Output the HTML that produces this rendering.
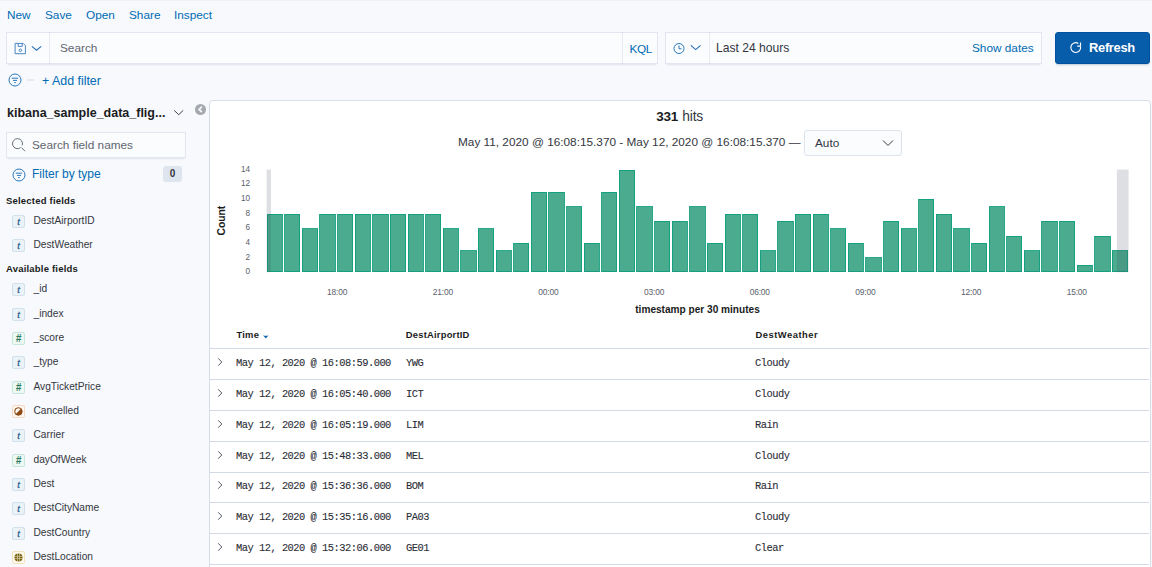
<!DOCTYPE html>
<html><head><meta charset="utf-8">
<style>
*{box-sizing:border-box;margin:0;padding:0}
html,body{width:1152px;height:567px;overflow:hidden;background:#F7F9FC;font-family:"Liberation Sans",sans-serif;color:#343741}
.a{position:absolute;white-space:pre}
.link{color:#006BB4}
.nav{top:8px;font-size:11.8px;line-height:14px}
.box{position:absolute;background:#FBFCFD;box-shadow:0 1px 1px -1px rgba(152,162,179,.2),0 3px 2px -2px rgba(152,162,179,.2),inset 0 0 0 1px rgba(17,43,134,.1)}
.vline{position:absolute;top:0;bottom:0;width:1px;background:rgba(17,43,134,.08)}
.fld{position:absolute;left:0;width:200px;height:24px}
.tok{position:absolute;left:12px;top:0;width:13px;height:13px;border-radius:2.5px;font:italic 9.5px "Liberation Sans",sans-serif;-webkit-text-stroke:0.25px currentColor;text-align:center;line-height:13px}
.tok.t{background:#EBF2F8;box-shadow:inset 0 0 0 1px #D0E0EC;color:#1F5B86}
.tok.n{background:#EEF8F4;box-shadow:inset 0 0 0 1px #C7E6DA;color:#2B7A60;font:italic bold 10px "Liberation Sans",sans-serif;-webkit-text-stroke:0;line-height:13px}
.fname{position:absolute;left:33.5px;top:-0.6px;font-size:10.2px;line-height:13px;color:#343741}
.sech{position:absolute;left:6px;margin-top:0.8px;font-weight:bold;font-size:9.5px;letter-spacing:0.2px;color:#1a1c21}
.mono{font-family:"Liberation Mono",monospace;font-size:10.4px;letter-spacing:-0.5px;color:#2a2d35;-webkit-text-stroke:0.1px #2a2d35}
.row{position:absolute;left:210px;width:939px;height:31px;border-bottom:1px solid #D3DAE6}
</style></head><body>

<div class="a" style="left:0;top:0;width:1152px;height:1px;background:#EFF2F6"></div>
<!-- top nav -->
<div class="a link nav" style="left:7px">New</div>
<div class="a link nav" style="left:45px">Save</div>
<div class="a link nav" style="left:86px">Open</div>
<div class="a link nav" style="left:129px">Share</div>
<div class="a link nav" style="left:174px">Inspect</div>

<!-- query bar -->
<div class="box" style="left:6px;top:32px;width:652px;height:32px">
  <div class="vline" style="left:43px"></div>
  <div class="vline" style="left:616px"></div>
</div>
<svg class="a" style="left:14px;top:42px" width="30" height="14" viewBox="0 0 30 14">
  <path d="M1.1 1.4H9.2L11.4 3.6V11.7H1.1Z" fill="none" stroke="#3F80C2" stroke-width="0.95" stroke-linejoin="round"/>
  <path d="M4.2 1.4V4.4H8.2V1.4" fill="none" stroke="#3F80C2" stroke-width="0.95"/>
  <circle cx="6.4" cy="8.3" r="1.25" fill="none" stroke="#3F80C2" stroke-width="0.95"/>
  <path d="M17.9 4.3l4.6 3.9 4.7-3.9" fill="none" stroke="#2472BA" stroke-width="1.1"/>
</svg>
<div class="a" style="left:60px;top:41px;font-size:11.8px;color:#5F6570">Search</div>
<div class="a link" style="left:629.5px;top:41.5px;font-size:11.8px;letter-spacing:-0.45px">KQL</div>

<!-- date picker -->
<div class="box" style="left:665px;top:32px;width:377px;height:32px">
  <div class="vline" style="left:44px"></div>
</div>
<svg class="a" style="left:672px;top:42px" width="32" height="14" viewBox="0 0 32 14">
  <circle cx="7" cy="6.5" r="5" fill="none" stroke="#1F72B8" stroke-width="0.95"/>
  <path d="M7 3.5v3.3h2.5" fill="none" stroke="#1F72B8" stroke-width="0.95"/>
  <path d="M18.9 3.3l4.8 4.3 4.9-4.3" fill="none" stroke="#2472BA" stroke-width="1.1"/>
</svg>
<div class="a" style="left:716px;top:40.8px;font-size:12.1px;color:#343741">Last 24 hours</div>
<div class="a link" style="left:972px;top:41px;font-size:11.8px">Show dates</div>

<!-- refresh -->
<div class="a" style="left:1055px;top:32px;width:95px;height:32px;background:#085DAA;border:1px solid #0151A0;border-radius:3px;box-shadow:0 2px 2px -1px rgba(54,97,126,.3)"></div>
<svg class="a" style="left:1069px;top:41px" width="14" height="14" viewBox="0 0 14 14">
  <path d="M9.3 2.4A4.9 4.9 0 1 0 11.6 5.9" fill="none" stroke="#fff" stroke-width="1.15"/>
  <path d="M8.2 5.1h3.3v-3.7" fill="none" stroke="#fff" stroke-width="1.15"/>
</svg>
<div class="a" style="left:1089px;top:40px;font-size:12.9px;letter-spacing:-0.3px;font-weight:bold;color:#fff">Refresh</div>

<!-- filter row -->
<svg class="a" style="left:8px;top:73px" width="30" height="14" viewBox="0 0 30 14">
  <circle cx="7" cy="7" r="6" fill="none" stroke="#1F72B8" stroke-width="0.95"/>
  <path d="M3.8 5.2h6.4M5 7.4h4M6.2 9.6h1.6" stroke="#1F72B8" stroke-width="0.95"/>
  <path d="M19 7h7" stroke="#D3DAE6" stroke-width="1"/>
</svg>
<div class="a link" style="left:42px;top:74px;font-size:12.4px">+ Add filter</div>

<!-- sidebar -->
<div class="a" style="left:7px;top:105.5px;font-size:12.5px;font-weight:bold;color:#1a1c21">kibana_sample_data_flig...</div>
<svg class="a" style="left:173px;top:108px" width="12" height="8" viewBox="0 0 12 8">
  <path d="M1.2 2.4l4.5 4.3 4.5-4.3" fill="none" stroke="#343741" stroke-width="0.95"/>
</svg>
<svg class="a" style="left:194px;top:103px" width="13" height="13" viewBox="0 0 13 13">
  <circle cx="6.5" cy="6.5" r="5.5" fill="#A5A8AE"/>
  <path d="M7.9 3.7L5.1 6.4l2.8 2.7" fill="none" stroke="#F7F9FC" stroke-width="1.7"/>
</svg>

<div class="box" style="left:6px;top:132px;width:180px;height:26px"></div>
<svg class="a" style="left:11px;top:137px" width="16" height="16" viewBox="0 0 16 16">
  <path d="M11.2 8.4A5 5 0 1 0 9.6 10.6" fill="none" stroke="#5F6570" stroke-width="0.95"/>
  <path d="M10.6 10.6l3.4 3.6" stroke="#5F6570" stroke-width="0.95"/>
</svg>
<div class="a" style="left:32px;top:138px;font-size:11.8px;color:#5F6570">Search field names</div>

<svg class="a" style="left:11.6px;top:167.5px" width="14" height="14" viewBox="0 0 14 14">
  <circle cx="7" cy="7" r="6" fill="none" stroke="#1F72B8" stroke-width="0.95"/>
  <path d="M3.8 5.2h6.4M5 7.4h4M6.2 9.6h1.6" stroke="#1F72B8" stroke-width="0.95"/>
</svg>
<div class="a link" style="left:32px;top:167px;font-size:12px">Filter by type</div>
<div class="a" style="left:163px;top:166px;width:19px;height:16px;background:#DFE5EE;border-radius:3px;font-size:10px;font-weight:bold;text-align:center;line-height:16px;color:#343741">0</div>

<div class="sech" style="top:194px">Selected fields</div>
<div class="fld" style="top:215px"><div class="tok t">t</div><div class="fname">DestAirportID</div></div>
<div class="fld" style="top:239px"><div class="tok t">t</div><div class="fname">DestWeather</div></div>
<div class="sech" style="top:262.2px">Available fields</div>
<div class="fld" style="top:283px"><div class="tok t">t</div><div class="fname">_id</div></div>
<div class="fld" style="top:308px"><div class="tok t">t</div><div class="fname">_index</div></div>
<div class="fld" style="top:332px"><div class="tok n">#</div><div class="fname">_score</div></div>
<div class="fld" style="top:356px"><div class="tok t">t</div><div class="fname">_type</div></div>
<div class="fld" style="top:381px"><div class="tok n">#</div><div class="fname">AvgTicketPrice</div></div>
<div class="fld" style="top:405px"><div class="tok" style="background:#FEF7F2;box-shadow:inset 0 0 0 1px #F5D9C4"><svg width="13" height="13" viewBox="0 0 13 13" style="position:absolute;left:0;top:0"><circle cx="6.4" cy="6.4" r="4" fill="#8C4A12"/><path d="M9.2 3.6A4 4 0 0 0 3.6 9.2z" fill="#fff" opacity=".95"/><circle cx="6.4" cy="6.4" r="3.6" fill="none" stroke="#8C4A12" stroke-width=".8"/></svg></div><div class="fname">Cancelled</div></div>
<div class="fld" style="top:429px"><div class="tok t">t</div><div class="fname">Carrier</div></div>
<div class="fld" style="top:454px"><div class="tok n">#</div><div class="fname">dayOfWeek</div></div>
<div class="fld" style="top:478px"><div class="tok t">t</div><div class="fname">Dest</div></div>
<div class="fld" style="top:502px"><div class="tok t">t</div><div class="fname">DestCityName</div></div>
<div class="fld" style="top:527px"><div class="tok t">t</div><div class="fname">DestCountry</div></div>
<div class="fld" style="top:551px"><div class="tok" style="background:#FFFBEF;box-shadow:inset 0 0 0 1px #F1E3B9"><svg width="13" height="13" viewBox="0 0 13 13" style="position:absolute;left:0;top:0"><circle cx="6.5" cy="6.5" r="4.1" fill="#7D6614"/><path d="M2.4 5.5h8.2M2.4 7.5h8.2M5.5 2.4v8.2M7.5 2.4v8.2" stroke="#FFFBEF" stroke-width=".55" opacity=".8"/></svg></div><div class="fname">DestLocation</div></div>

<!-- main panel -->
<div class="a" style="left:209px;top:100px;width:942px;height:480px;background:#fff;border:1px solid #D8DEE8;border-radius:4px"></div>

<div class="a" style="left:656.2px;top:109.1px;line-height:16px;font-size:13.5px;letter-spacing:-0.25px;font-weight:bold;color:#1a1c21">331</div><div class="a" style="left:682.3px;top:109px;line-height:16px;font-size:13.8px;letter-spacing:-0.2px;color:#343741">hits</div>
<div class="a" style="left:458px;top:134.6px;font-size:11.8px;color:#343741">May 11, 2020 @ 16:08:15.370 - May 12, 2020 @ 16:08:15.370 —</div>
<div class="a" style="left:804px;top:130px;width:98px;height:26px;background:#FBFCFD;border:1px solid #DDE3EC;border-radius:3px"></div>
<div class="a" style="left:815px;top:136px;font-size:11.8px;color:#343741">Auto</div>
<svg class="a" style="left:882px;top:139px" width="12" height="8" viewBox="0 0 12 8">
  <path d="M1 1.5l5 5 5-5" fill="none" stroke="#343741" stroke-width="1"/>
</svg>

<!-- chart -->
<svg id="chart" class="a" style="left:210px;top:160px" width="940" height="160" viewBox="0 0 940 160">
<rect x="57.150000000000006" y="54.010000000000005" width="15.209999999999999" height="57.74" fill="#4AAB8E" stroke="#0FA07D" stroke-width="0.9" shape-rendering="crispEdges">
</rect>
<rect x="74.76" y="54.010000000000005" width="15.209999999999999" height="57.74" fill="#4AAB8E" stroke="#0FA07D" stroke-width="0.9" shape-rendering="crispEdges">
</rect>
<rect x="92.37" y="68.67" width="15.209999999999999" height="43.080000000000005" fill="#4AAB8E" stroke="#0FA07D" stroke-width="0.9" shape-rendering="crispEdges">
</rect>
<rect x="109.98" y="54.010000000000005" width="15.209999999999999" height="57.74" fill="#4AAB8E" stroke="#0FA07D" stroke-width="0.9" shape-rendering="crispEdges">
</rect>
<rect x="127.59" y="54.010000000000005" width="15.209999999999999" height="57.74" fill="#4AAB8E" stroke="#0FA07D" stroke-width="0.9" shape-rendering="crispEdges">
</rect>
<rect x="145.2" y="54.010000000000005" width="15.209999999999999" height="57.74" fill="#4AAB8E" stroke="#0FA07D" stroke-width="0.9" shape-rendering="crispEdges">
</rect>
<rect x="162.81" y="54.010000000000005" width="15.209999999999999" height="57.74" fill="#4AAB8E" stroke="#0FA07D" stroke-width="0.9" shape-rendering="crispEdges">
</rect>
<rect x="180.42" y="54.010000000000005" width="15.209999999999999" height="57.74" fill="#4AAB8E" stroke="#0FA07D" stroke-width="0.9" shape-rendering="crispEdges">
</rect>
<rect x="198.02999999999997" y="54.010000000000005" width="15.209999999999999" height="57.74" fill="#4AAB8E" stroke="#0FA07D" stroke-width="0.9" shape-rendering="crispEdges">
</rect>
<rect x="215.64" y="54.010000000000005" width="15.209999999999999" height="57.74" fill="#4AAB8E" stroke="#0FA07D" stroke-width="0.9" shape-rendering="crispEdges">
</rect>
<rect x="233.25" y="68.67" width="15.209999999999999" height="43.080000000000005" fill="#4AAB8E" stroke="#0FA07D" stroke-width="0.9" shape-rendering="crispEdges">
</rect>
<rect x="250.85999999999996" y="90.66000000000001" width="15.209999999999999" height="21.090000000000003" fill="#4AAB8E" stroke="#0FA07D" stroke-width="0.9" shape-rendering="crispEdges">
</rect>
<rect x="268.46999999999997" y="68.67" width="15.209999999999999" height="43.080000000000005" fill="#4AAB8E" stroke="#0FA07D" stroke-width="0.9" shape-rendering="crispEdges">
</rect>
<rect x="286.08" y="90.66000000000001" width="15.209999999999999" height="21.090000000000003" fill="#4AAB8E" stroke="#0FA07D" stroke-width="0.9" shape-rendering="crispEdges">
</rect>
<rect x="303.69" y="83.33" width="15.209999999999999" height="28.42" fill="#4AAB8E" stroke="#0FA07D" stroke-width="0.9" shape-rendering="crispEdges">
</rect>
<rect x="321.29999999999995" y="32.02000000000001" width="15.209999999999999" height="79.72999999999999" fill="#4AAB8E" stroke="#0FA07D" stroke-width="0.9" shape-rendering="crispEdges">
</rect>
<rect x="338.90999999999997" y="32.02000000000001" width="15.209999999999999" height="79.72999999999999" fill="#4AAB8E" stroke="#0FA07D" stroke-width="0.9" shape-rendering="crispEdges">
</rect>
<rect x="356.52" y="46.68000000000001" width="15.209999999999999" height="65.07" fill="#4AAB8E" stroke="#0FA07D" stroke-width="0.9" shape-rendering="crispEdges">
</rect>
<rect x="374.13" y="83.33" width="15.209999999999999" height="28.42" fill="#4AAB8E" stroke="#0FA07D" stroke-width="0.9" shape-rendering="crispEdges">
</rect>
<rect x="391.73999999999995" y="32.02000000000001" width="15.209999999999999" height="79.72999999999999" fill="#4AAB8E" stroke="#0FA07D" stroke-width="0.9" shape-rendering="crispEdges">
</rect>
<rect x="409.34999999999997" y="10.029999999999998" width="15.209999999999999" height="101.72" fill="#4AAB8E" stroke="#0FA07D" stroke-width="0.9" shape-rendering="crispEdges">
</rect>
<rect x="426.96" y="46.68000000000001" width="15.209999999999999" height="65.07" fill="#4AAB8E" stroke="#0FA07D" stroke-width="0.9" shape-rendering="crispEdges">
</rect>
<rect x="444.56999999999994" y="61.34" width="15.209999999999999" height="50.410000000000004" fill="#4AAB8E" stroke="#0FA07D" stroke-width="0.9" shape-rendering="crispEdges">
</rect>
<rect x="462.17999999999995" y="61.34" width="15.209999999999999" height="50.410000000000004" fill="#4AAB8E" stroke="#0FA07D" stroke-width="0.9" shape-rendering="crispEdges">
</rect>
<rect x="479.78999999999996" y="46.68000000000001" width="15.209999999999999" height="65.07" fill="#4AAB8E" stroke="#0FA07D" stroke-width="0.9" shape-rendering="crispEdges">
</rect>
<rect x="497.4" y="83.33" width="15.209999999999999" height="28.42" fill="#4AAB8E" stroke="#0FA07D" stroke-width="0.9" shape-rendering="crispEdges">
</rect>
<rect x="515.0100000000001" y="54.010000000000005" width="15.209999999999999" height="57.74" fill="#4AAB8E" stroke="#0FA07D" stroke-width="0.9" shape-rendering="crispEdges">
</rect>
<rect x="532.62" y="54.010000000000005" width="15.209999999999999" height="57.74" fill="#4AAB8E" stroke="#0FA07D" stroke-width="0.9" shape-rendering="crispEdges">
</rect>
<rect x="550.23" y="90.66000000000001" width="15.209999999999999" height="21.090000000000003" fill="#4AAB8E" stroke="#0FA07D" stroke-width="0.9" shape-rendering="crispEdges">
</rect>
<rect x="567.84" y="61.34" width="15.209999999999999" height="50.410000000000004" fill="#4AAB8E" stroke="#0FA07D" stroke-width="0.9" shape-rendering="crispEdges">
</rect>
<rect x="585.45" y="54.010000000000005" width="15.209999999999999" height="57.74" fill="#4AAB8E" stroke="#0FA07D" stroke-width="0.9" shape-rendering="crispEdges">
</rect>
<rect x="603.0600000000001" y="54.010000000000005" width="15.209999999999999" height="57.74" fill="#4AAB8E" stroke="#0FA07D" stroke-width="0.9" shape-rendering="crispEdges">
</rect>
<rect x="620.6700000000001" y="68.67" width="15.209999999999999" height="43.080000000000005" fill="#4AAB8E" stroke="#0FA07D" stroke-width="0.9" shape-rendering="crispEdges">
</rect>
<rect x="638.2800000000001" y="83.33" width="15.209999999999999" height="28.42" fill="#4AAB8E" stroke="#0FA07D" stroke-width="0.9" shape-rendering="crispEdges">
</rect>
<rect x="655.8900000000001" y="97.99000000000001" width="15.209999999999999" height="13.76" fill="#4AAB8E" stroke="#0FA07D" stroke-width="0.9" shape-rendering="crispEdges">
</rect>
<rect x="673.5000000000001" y="61.34" width="15.209999999999999" height="50.410000000000004" fill="#4AAB8E" stroke="#0FA07D" stroke-width="0.9" shape-rendering="crispEdges">
</rect>
<rect x="691.1100000000001" y="68.67" width="15.209999999999999" height="43.080000000000005" fill="#4AAB8E" stroke="#0FA07D" stroke-width="0.9" shape-rendering="crispEdges">
</rect>
<rect x="708.72" y="39.35000000000001" width="15.209999999999999" height="72.39999999999999" fill="#4AAB8E" stroke="#0FA07D" stroke-width="0.9" shape-rendering="crispEdges">
</rect>
<rect x="726.33" y="54.010000000000005" width="15.209999999999999" height="57.74" fill="#4AAB8E" stroke="#0FA07D" stroke-width="0.9" shape-rendering="crispEdges">
</rect>
<rect x="743.94" y="68.67" width="15.209999999999999" height="43.080000000000005" fill="#4AAB8E" stroke="#0FA07D" stroke-width="0.9" shape-rendering="crispEdges">
</rect>
<rect x="761.5500000000001" y="83.33" width="15.209999999999999" height="28.42" fill="#4AAB8E" stroke="#0FA07D" stroke-width="0.9" shape-rendering="crispEdges">
</rect>
<rect x="779.1600000000001" y="46.68000000000001" width="15.209999999999999" height="65.07" fill="#4AAB8E" stroke="#0FA07D" stroke-width="0.9" shape-rendering="crispEdges">
</rect>
<rect x="796.7700000000001" y="76.00000000000001" width="15.209999999999999" height="35.75" fill="#4AAB8E" stroke="#0FA07D" stroke-width="0.9" shape-rendering="crispEdges">
</rect>
<rect x="814.3800000000001" y="90.66000000000001" width="15.209999999999999" height="21.090000000000003" fill="#4AAB8E" stroke="#0FA07D" stroke-width="0.9" shape-rendering="crispEdges">
</rect>
<rect x="831.99" y="61.34" width="15.209999999999999" height="50.410000000000004" fill="#4AAB8E" stroke="#0FA07D" stroke-width="0.9" shape-rendering="crispEdges">
</rect>
<rect x="849.6" y="61.34" width="15.209999999999999" height="50.410000000000004" fill="#4AAB8E" stroke="#0FA07D" stroke-width="0.9" shape-rendering="crispEdges">
</rect>
<rect x="867.21" y="105.32000000000001" width="15.209999999999999" height="6.43" fill="#4AAB8E" stroke="#0FA07D" stroke-width="0.9" shape-rendering="crispEdges">
</rect>
<rect x="884.82" y="76.00000000000001" width="15.209999999999999" height="35.75" fill="#4AAB8E" stroke="#0FA07D" stroke-width="0.9" shape-rendering="crispEdges">
</rect>
<rect x="902.4300000000001" y="90.66000000000001" width="15.209999999999999" height="21.090000000000003" fill="#4AAB8E" stroke="#0FA07D" stroke-width="0.9" shape-rendering="crispEdges">
</rect>
<rect x="56.6" y="9.579999999999998" width="4.4" height="102.62" fill="rgb(72,76,96)" opacity=".18">
</rect>
<rect x="906.88" y="9.579999999999998" width="11.719999999999914" height="102.62" fill="rgb(72,76,96)" opacity=".18">
</rect>
<text x="40" y="114.3" text-anchor="end" font-size="8.2" fill="#5A606B" font-family="Liberation Sans">0</text>
<text x="40" y="99.64" text-anchor="end" font-size="8.2" fill="#5A606B" font-family="Liberation Sans">2</text>
<text x="40" y="84.97999999999999" text-anchor="end" font-size="8.2" fill="#5A606B" font-family="Liberation Sans">4</text>
<text x="40" y="70.32" text-anchor="end" font-size="8.2" fill="#5A606B" font-family="Liberation Sans">6</text>
<text x="40" y="55.660000000000004" text-anchor="end" font-size="8.2" fill="#5A606B" font-family="Liberation Sans">8</text>
<text x="40" y="41.00000000000001" text-anchor="end" font-size="8.2" fill="#5A606B" font-family="Liberation Sans">10</text>
<text x="40" y="26.339999999999996" text-anchor="end" font-size="8.2" fill="#5A606B" font-family="Liberation Sans">12</text>
<text x="40" y="11.679999999999998" text-anchor="end" font-size="8.2" fill="#5A606B" font-family="Liberation Sans">14</text>
<text transform="translate(15.2,60.6) rotate(-90)" text-anchor="middle" font-size="10.3" font-weight="bold" fill="#1a1c21" font-family="Liberation Sans">Count</text>
<text x="127.14" y="134.6" text-anchor="middle" font-size="8.4" letter-spacing="-0.15" fill="#5A606B" font-family="Liberation Sans">18:00</text>
<text x="232.8" y="134.6" text-anchor="middle" font-size="8.4" letter-spacing="-0.15" fill="#5A606B" font-family="Liberation Sans">21:00</text>
<text x="338.46" y="134.6" text-anchor="middle" font-size="8.4" letter-spacing="-0.15" fill="#5A606B" font-family="Liberation Sans">00:00</text>
<text x="444.11999999999995" y="134.6" text-anchor="middle" font-size="8.4" letter-spacing="-0.15" fill="#5A606B" font-family="Liberation Sans">03:00</text>
<text x="549.78" y="134.6" text-anchor="middle" font-size="8.4" letter-spacing="-0.15" fill="#5A606B" font-family="Liberation Sans">06:00</text>
<text x="655.44" y="134.6" text-anchor="middle" font-size="8.4" letter-spacing="-0.15" fill="#5A606B" font-family="Liberation Sans">09:00</text>
<text x="761.1" y="134.6" text-anchor="middle" font-size="8.4" letter-spacing="-0.15" fill="#5A606B" font-family="Liberation Sans">12:00</text>
<text x="866.76" y="134.6" text-anchor="middle" font-size="8.4" letter-spacing="-0.15" fill="#5A606B" font-family="Liberation Sans">15:00</text>
<text x="487.5" y="153" text-anchor="middle" font-size="10.1" font-weight="bold" fill="#1a1c21" font-family="Liberation Sans">timestamp per 30 minutes</text>
</svg>

<!-- table -->
<div class="a" style="left:236.5px;top:328.7px;font-size:9.4px;letter-spacing:0.22px;font-weight:bold;color:#1a1c21">Time</div>
<svg class="a" style="left:262.8px;top:334.8px" width="6" height="4" viewBox="0 0 6 4"><path d="M0 0.3Q2.8 1.3 5.6 0.3L2.8 3.6z" fill="#0B64B0"/></svg>
<div class="a" style="left:405.8px;top:328.7px;font-size:9.4px;letter-spacing:0.22px;font-weight:bold;color:#1a1c21">DestAirportID</div>
<div class="a" style="left:755.5px;top:328.7px;font-size:9.4px;letter-spacing:0.5px;font-weight:bold;color:#1a1c21">DestWeather</div>
<div class="a" style="left:210px;top:348px;width:939px;height:1px;background:#D3DAE6"></div>

<div id="rows">
<div class="a" style="left:210px;top:379px;width:939px;height:1px;background:#D3DAE6"></div>
<svg class="a" style="left:216px;top:357px" width="8" height="10" viewBox="0 0 8 10"><path d="M2.2 1.3l3.6 3.7L2.2 8.7" fill="none" stroke="#4A4F5A" stroke-width="0.95"></path></svg>
<div class="a mono" style="left:236px;top:357px">May 12, 2020 @ 16:08:59.000</div><div class="a mono" style="left:406px;top:357px">YWG</div><div class="a mono" style="left:755px;top:357px">Cloudy</div><div class="a" style="left:210px;top:410px;width:939px;height:1px;background:#D3DAE6"></div>
<svg class="a" style="left:216px;top:387.85px" width="8" height="10" viewBox="0 0 8 10"><path d="M2.2 1.3l3.6 3.7L2.2 8.7" fill="none" stroke="#4A4F5A" stroke-width="0.95"></path></svg>
<div class="a mono" style="left:236px;top:387.85px">May 12, 2020 @ 16:05:40.000</div><div class="a mono" style="left:406px;top:387.85px">ICT</div><div class="a mono" style="left:755px;top:387.85px">Cloudy</div><div class="a" style="left:210px;top:441px;width:939px;height:1px;background:#D3DAE6"></div>
<svg class="a" style="left:216px;top:418.7px" width="8" height="10" viewBox="0 0 8 10"><path d="M2.2 1.3l3.6 3.7L2.2 8.7" fill="none" stroke="#4A4F5A" stroke-width="0.95"></path></svg>
<div class="a mono" style="left:236px;top:418.7px">May 12, 2020 @ 16:05:19.000</div><div class="a mono" style="left:406px;top:418.7px">LIM</div><div class="a mono" style="left:755px;top:418.7px">Rain</div><div class="a" style="left:210px;top:472px;width:939px;height:1px;background:#D3DAE6"></div>
<svg class="a" style="left:216px;top:449.55px" width="8" height="10" viewBox="0 0 8 10"><path d="M2.2 1.3l3.6 3.7L2.2 8.7" fill="none" stroke="#4A4F5A" stroke-width="0.95"></path></svg>
<div class="a mono" style="left:236px;top:449.55px">May 12, 2020 @ 15:48:33.000</div><div class="a mono" style="left:406px;top:449.55px">MEL</div><div class="a mono" style="left:755px;top:449.55px">Cloudy</div><div class="a" style="left:210px;top:502px;width:939px;height:1px;background:#D3DAE6"></div>
<svg class="a" style="left:216px;top:480.4px" width="8" height="10" viewBox="0 0 8 10"><path d="M2.2 1.3l3.6 3.7L2.2 8.7" fill="none" stroke="#4A4F5A" stroke-width="0.95"></path></svg>
<div class="a mono" style="left:236px;top:480.4px">May 12, 2020 @ 15:36:36.000</div><div class="a mono" style="left:406px;top:480.4px">BOM</div><div class="a mono" style="left:755px;top:480.4px">Rain</div><div class="a" style="left:210px;top:533px;width:939px;height:1px;background:#D3DAE6"></div>
<svg class="a" style="left:216px;top:511.25px" width="8" height="10" viewBox="0 0 8 10"><path d="M2.2 1.3l3.6 3.7L2.2 8.7" fill="none" stroke="#4A4F5A" stroke-width="0.95"></path></svg>
<div class="a mono" style="left:236px;top:511.25px">May 12, 2020 @ 15:35:16.000</div><div class="a mono" style="left:406px;top:511.25px">PA03</div><div class="a mono" style="left:755px;top:511.25px">Cloudy</div><div class="a" style="left:210px;top:564px;width:939px;height:1px;background:#D3DAE6"></div>
<svg class="a" style="left:216px;top:542.1px" width="8" height="10" viewBox="0 0 8 10"><path d="M2.2 1.3l3.6 3.7L2.2 8.7" fill="none" stroke="#4A4F5A" stroke-width="0.95"></path></svg>
<div class="a mono" style="left:236px;top:542.1px">May 12, 2020 @ 15:32:06.000</div><div class="a mono" style="left:406px;top:542.1px">GE01</div><div class="a mono" style="left:755px;top:542.1px">Clear</div>
</div>


</body></html>
